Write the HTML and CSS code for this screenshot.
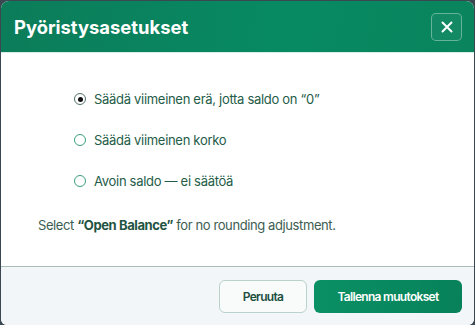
FILE: index.html
```html
<!DOCTYPE html>
<html lang="fi">
<head>
    <meta charset="UTF-8">
    <meta name="viewport" content="width=device-width, initial-scale=1.0">
    <title>Pyöristysasetukset</title>
    <link rel="stylesheet" href="styles.css">
</head>
<body>

<div class="dialog">
    <div class="dialog-header">
        <div class="dialog-title">Pyöristysasetukset</div>
        <button class="close-btn" aria-label="Sulje">
            <svg width="14" height="14" viewBox="0 0 14 14">
                <path d="M2.5 2.5 L11.5 11.5 M11.5 2.5 L2.5 11.5" stroke="#fff" stroke-width="2" stroke-linecap="round"/>
            </svg>
        </button>
    </div>

    <div class="dialog-body">
        <div class="radio-group">
            <label class="radio-row">
                <input type="radio" name="rounding" checked>
                <span class="radio-mark"></span>
                <span>Säädä viimeinen erä, jotta saldo on “0”</span>
            </label>
            <label class="radio-row">
                <input type="radio" name="rounding">
                <span class="radio-mark"></span>
                <span>Säädä viimeinen korko</span>
            </label>
            <label class="radio-row">
                <input type="radio" name="rounding">
                <span class="radio-mark"></span>
                <span>Avoin saldo — ei säätöä</span>
            </label>
        </div>
        <div class="note">Select <b>“Open Balance”</b> for no rounding adjustment.</div>
    </div>

    <div class="dialog-footer">
        <button class="btn btn-cancel">Peruuta</button>
        <button class="btn btn-save">Tallenna muutokset</button>
    </div>
</div>

</body>
</html>
```

FILE: styles.css
```css
body {
    margin: 0;
    background-color: #3b4852;
    font-family: Inter, "Noto Sans", sans-serif;
    height: 325px;
    overflow: hidden;
}
.dialog {
    margin: 1px 1px 0 1px;
    height: 324px;
    box-sizing: border-box;
    background-color: #fff;
    border-radius: 8px 8px 6px 6px;
    overflow: hidden;
    display: flex;
    flex-direction: column;
}
.dialog-header {
    height: 52px;
    flex-shrink: 0;
    box-sizing: border-box;
    display: flex;
    align-items: center;
    justify-content: space-between;
    padding: 0 12px 0 13px;
    background: linear-gradient(100deg, #0c7c59, #078a62 60%, #0a845d);
    border-bottom: 1px solid #d6efe6;
}
.dialog-title {
    color: #fff;
    font-size: 18.4px;
    font-weight: 700;
}
.close-btn {
    width: 31px;
    height: 28px;
    margin-top: 1px;
    display: flex;
    align-items: center;
    justify-content: center;
    background: rgba(255, 255, 255, 0.04);
    border: 1px solid rgba(255, 255, 255, 0.35);
    border-radius: 5px;
    padding: 0;
    cursor: pointer;
}
.dialog-body {
    flex-grow: 1;
    padding: 36px 24px 0 37px;
}
.radio-group {
    display: flex;
    flex-direction: column;
    gap: 21px;
    padding-left: 36px;
    margin-bottom: 26px;
}
.radio-row {
    display: flex;
    align-items: center;
    height: 20px;
    font-size: 13px;
    letter-spacing: -0.3px;
    color: #245c48;
    cursor: pointer;
}
.radio-row input {
    display: none;
}
.radio-mark {
    width: 10px;
    height: 10px;
    border: 1.5px solid #3a9e7e;
    border-radius: 50%;
    margin-right: 8px;
    display: flex;
    align-items: center;
    justify-content: center;
}
.radio-row input:checked + .radio-mark {
    border-color: #52706a;
}
.radio-row input:checked + .radio-mark::after {
    content: "";
    width: 5px;
    height: 5px;
    border-radius: 50%;
    background-color: #111;
}
.note {
    font-size: 13px;
    letter-spacing: -0.4px;
    color: #3c5e52;
}
.note b {
    color: #1f5442;
}
.dialog-footer {
    height: 59px;
    flex-shrink: 0;
    display: flex;
    justify-content: flex-end;
    align-items: flex-start;
    gap: 7px;
    padding: 13px 12px 0 0;
    box-sizing: border-box;
    background-color: #f3f6f8;
    border-top: 1px solid #a9bdb6;
}
.btn {
    height: 33px;
    border-radius: 6px;
    font-family: Inter, "Noto Sans", sans-serif;
    font-size: 12px;
    font-weight: 600;
    letter-spacing: -0.7px;
    cursor: pointer;
}
.btn-cancel {
    width: 88px;
    background-color: #f9fbfb;
    border: 1px solid #b9d2cb;
    color: #1d4e40;
}
.btn-save {
    width: 148px;
    border: none;
    color: #fff;
    background: linear-gradient(100deg, #0a9065, #078159);
}
```
